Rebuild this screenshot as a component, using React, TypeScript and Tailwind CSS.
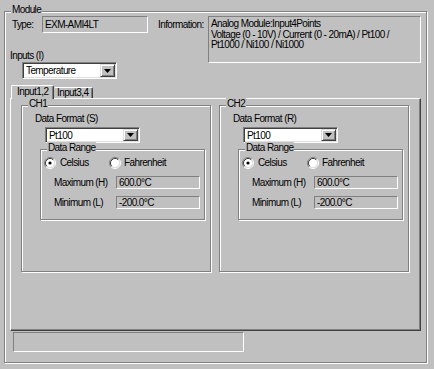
import React from 'react';

function Group({ title, className, children }: { title: string; className?: string; children?: React.ReactNode }) {
  return (
    <div className={`relative border border-[#808080] shadow-[inset_1px_1px_0_#fff,1px_1px_0_#fff] ${className ?? ''}`}>
      <span className="absolute left-[6px] top-[-8px] bg-[#c0c0c0] px-[1px] leading-[12px]">{title}</span>
      {children}
    </div>
  );
}

function Combo({ value, className }: { value: string; className?: string }) {
  return (
    <div className={`flex border border-[#808080] border-r-white border-b-white bg-white p-[1px] shadow-[inset_1px_1px_0_#404040,inset_-1px_-1px_0_#dfdfdf] ${className ?? ''}`}>
      <div className="flex-1 pl-[2px] leading-[13px] overflow-hidden whitespace-nowrap">{value}</div>
      <div className="flex w-[15px] items-center justify-center border border-t-[#dfdfdf] border-l-[#dfdfdf] border-r-[#404040] border-b-[#404040] bg-[#c0c0c0] shadow-[inset_1px_1px_0_#fff,inset_-1px_-1px_0_#808080]">
        <svg width="7" height="4" viewBox="0 0 7 4">
          <path d="M0 0h7L3.5 4z" fill="#000" />
        </svg>
      </div>
    </div>
  );
}

function Radio({ checked }: { checked?: boolean }) {
  return (
    <svg width="12" height="12" viewBox="0 0 12 12" className="shrink-0">
      <circle cx="6" cy="6" r="4.5" fill="#fff" />
      <path d="M2.11 9.89A5.5 5.5 0 0 1 9.89 2.11" fill="none" stroke="#808080" />
      <path d="M2.82 9.18A4.5 4.5 0 0 1 9.18 2.82" fill="none" stroke="#404040" />
      <path d="M9.89 2.11A5.5 5.5 0 0 1 2.11 9.89" fill="none" stroke="#fff" />
      <path d="M9.18 2.82A4.5 4.5 0 0 1 2.82 9.18" fill="none" stroke="#dfdfdf" />
      {checked && <circle cx="6" cy="6" r="1.6" fill="#000" />}
    </svg>
  );
}

function Field({ label, value }: { label: string; value: string }) {
  return (
    <div className="flex h-[13px] items-center">
      <div className="w-[62px] leading-[13px] whitespace-nowrap">{label}</div>
      <div className="h-[13px] w-[84px] border border-[#808080] border-r-white border-b-white pl-[2px] leading-[11px] whitespace-nowrap">
        {value}
      </div>
    </div>
  );
}

function Channel({ title, format }: { title: string; format: string }) {
  return (
    <Group title={title} className="h-[167px] w-[190px]">
      <div className="ml-[13px] mt-[6px] leading-[13px] whitespace-nowrap">{format}</div>
      <Combo value="Pt100" className="ml-[23px] mt-[2px] h-[16px] w-[95px]" />
      <Group title="Data Range" className="ml-[18px] mt-[6px] h-[71px] w-[165px]">
        <div className="ml-[3px] mt-[7px] flex h-[12px] items-center">
          <div className="flex w-[65px] items-center gap-[4px]">
            <Radio checked />
            <span className="leading-[12px]">Celsius</span>
          </div>
          <div className="flex items-center gap-[3px]">
            <Radio />
            <span className="leading-[12px]">Fahrenheit</span>
          </div>
        </div>
        <div className="ml-[13px] mt-[7px] flex flex-col gap-[7px]">
          <Field label="Maximum (H)" value="600.0°C" />
          <Field label="Minimum (L)" value="-200.0°C" />
        </div>
      </Group>
    </Group>
  );
}

export default function App() {
  return (
    <div className="h-[369px] w-[434px] overflow-hidden bg-[#c0c0c0] pt-[11px] pl-[4px] font-['Liberation_Sans',Arial,sans-serif] text-[10px] tracking-[-0.6px] text-black">
      <Group title="Module" className="h-[352px] w-[423px]">
        <div className="mt-[4px] flex items-start">
          <div className="flex w-[153px] flex-col">
            <div className="flex h-[17px] items-center pl-[7px]">
              <div className="w-[30px] pt-[1px] leading-[16px]">Type:</div>
              <div className="h-[17px] w-[106px] border border-[#808080] border-r-white border-b-white pl-[2px] pt-[1px] leading-[14px]">
                EXM-AMI4LT
              </div>
            </div>
            <div className="ml-[5px] mt-[16px] leading-[13px]">Inputs (I)</div>
            <Combo value="Temperature" className="ml-[17px] h-[17px] w-[95px]" />
          </div>
          <div className="flex items-start">
            <div className="h-[17px] w-[50px] pt-[1px] leading-[16px]">Information:</div>
            <div className="h-[47px] w-[213px] border border-[#808080] border-r-white border-b-white pl-[2px] pt-[2px] leading-[10.5px]">
              <div>Analog Module:Input4Points</div>
              <div>Voltage (0 - 10V) / Current (0 - 20mA) / Pt100 /</div>
              <div>Pt1000 / Ni100 / Ni1000</div>
            </div>
          </div>
        </div>

        <div className="ml-[6px] mt-[6px] flex h-[13px] items-end">
          <div className="relative z-10 mb-[-1px] h-[14px] w-[43px] rounded-t-[2px] border-t border-l border-r border-t-white border-l-white border-r-[#404040] bg-[#c0c0c0] pl-[5px] leading-[12px] whitespace-nowrap shadow-[inset_-1px_0_0_#808080]">
            Input1,2
          </div>
          <div className="h-[11px] w-[39px] rounded-t-[2px] border-t border-r border-t-white border-r-[#404040] pl-[3px] leading-[10px] whitespace-nowrap shadow-[inset_-1px_0_0_#808080]">
            Input3,4
          </div>
        </div>

        <div className="ml-[5px] h-[233px] w-[411px] border border-t-white border-l-white border-r-[#404040] border-b-[#404040] shadow-[inset_-1px_-1px_0_#808080]">
          <div className="ml-[10px] mt-[6px] flex gap-[8px]">
            <Channel title="CH1" format="Data Format (S)" />
            <Channel title="CH2" format="Data Format (R)" />
          </div>
        </div>

        <div className="ml-[8px] mt-[1px] h-[20px] w-[231px] border border-[#808080] border-r-white border-b-white" />
      </Group>
    </div>
  );
}
